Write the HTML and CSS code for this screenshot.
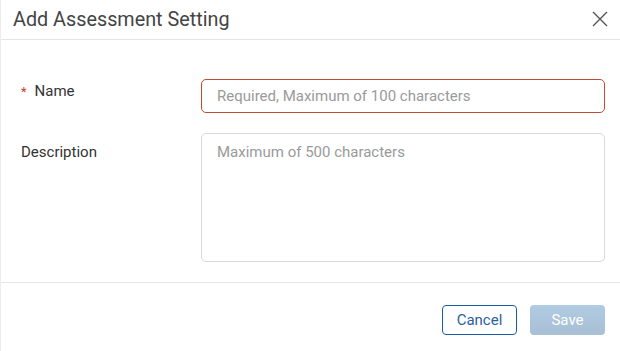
FILE: index.html
```html
<!DOCTYPE html>
<html>
<head>
<meta charset="utf-8">
<link rel="stylesheet" href="styles.css">
</head>
<body>
<div class="dialog">
  <div class="header">
    <div class="title">Add Assessment Setting</div>
    <svg class="close" width="16" height="16" viewBox="0 0 16 16"><path d="M1 1 L15 15 M15 1 L1 15" stroke="#555" stroke-width="1.4" fill="none"/></svg>
  </div>
  <div class="body">
    <div class="row">
      <label class="label label-name"><span class="req">*</span>Name</label>
      <div class="input name-input">Required, Maximum of 100 characters</div>
    </div>
    <div class="row">
      <label class="label label-desc">Description</label>
      <div class="input textarea">Maximum of 500 characters</div>
    </div>
  </div>
  <div class="footer">
    <button class="btn cancel">Cancel</button>
    <button class="btn save">Save</button>
  </div>
</div>
</body>
</html>
```
FILE: styles.css
```css
html, body { margin: 0; padding: 0; background: #fff; }
body { font-family: Roboto, "Liberation Sans", sans-serif; color: #333; }
.dialog { width: 620px; height: 351px; border-left: 1px solid #ececec; box-sizing: border-box; display: flex; flex-direction: column; }
.header { height: 39px; border-bottom: 1px solid #e6e6e6; display: flex; align-items: center; justify-content: space-between; padding: 0 12px 0 12px; box-sizing: content-box; }
.title { font-size: 19.8px; color: #444; margin-top: -1px; }
.close { margin-top: -1px; }
.body { height: 243px; border-bottom: 1px solid #e6e6e6; padding: 39px 15px 0 20px; box-sizing: border-box; display: flex; flex-direction: column; gap: 20px; }
.row { display: flex; align-items: flex-start; }
.label { width: 180px; font-size: 15px; color: #333; line-height: 18px; }
.label-name { padding-top: 3px; }
.label-desc { padding-top: 10px; }
.req { color: #c8402a; margin-right: 8px; font-size: 13px; }
.input { flex: 1; border: 1px solid #d9d9d9; border-radius: 5px; font-size: 15px; color: #9a9a9a; padding: 0 15px; box-sizing: border-box; }
.name-input { height: 34px; line-height: 32px; border-color: #c24a33; }
.textarea { height: 129px; padding-top: 7px; line-height: 22px; }
.footer { flex: 1; display: flex; justify-content: flex-end; align-items: flex-start; gap: 13px; padding: 22px 15px 0 0; }
.btn { height: 30px; width: 75px; border-radius: 4px; font-family: Roboto, "Liberation Sans", sans-serif; font-size: 15px; box-sizing: border-box; padding: 0 0 1px 0; }
.cancel { background: #fff; border: 1px solid #1b5ea6; color: #2b5f9c; }
.save { background: linear-gradient(#b0cbe3, #a8bfd4); border: none; color: #fff; }
```
